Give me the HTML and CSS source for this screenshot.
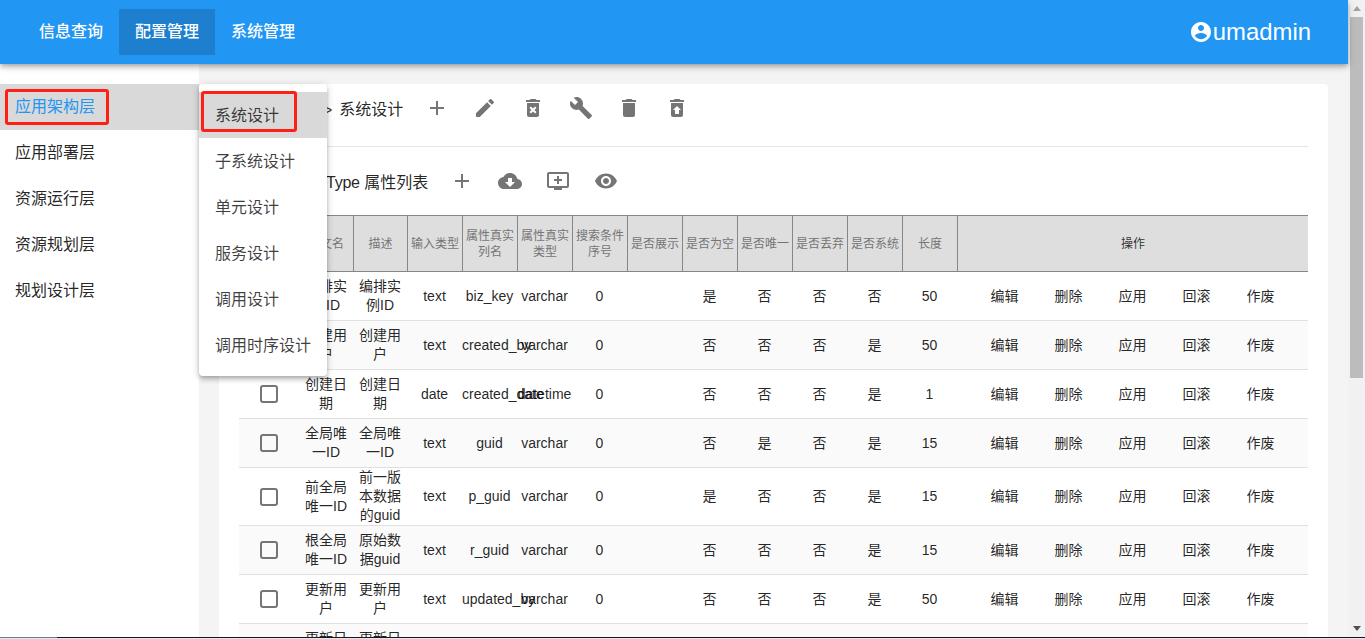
FILE: index.html
```html
<!DOCTYPE html>
<html lang="zh">
<head>
<meta charset="utf-8">
<title>配置管理</title>
<link rel="stylesheet" href="styles.css">
</head>
<body>
<div class="screen">
  <div class="window">
    <div class="page">
      <header class="topbar">
        <nav class="nav">
          <a class="nav-item">信息查询</a>
          <a class="nav-item active">配置管理</a>
          <a class="nav-item">系统管理</a>
        </nav>
        <div class="user">
          <svg class="user-icon" viewBox="0 0 24 24"><path d="M12 2C6.48 2 2 6.48 2 12s4.48 10 10 10 10-4.48 10-10S17.52 2 12 2zm0 3c1.66 0 3 1.34 3 3s-1.34 3-3 3-3-1.34-3-3 1.34-3 3-3zm0 14.2c-2.5 0-4.71-1.28-6-3.22.03-1.99 4-3.08 6-3.08 1.99 0 5.97 1.09 6 3.08-1.29 1.94-3.5 3.22-6 3.22z"/></svg>
          <span>umadmin</span>
        </div>
      </header>
      <div class="body">
        <aside class="sidebar">
          <div class="side-item selected"><span class="mark mark-side"></span>应用架构层</div>
          <div class="side-item">应用部署层</div>
          <div class="side-item">资源运行层</div>
          <div class="side-item">资源规划层</div>
          <div class="side-item">规划设计层</div>
          <div class="menu">
            <div class="menu-item selected"><span class="mark mark-menu"></span>系统设计</div>
            <div class="menu-item">子系统设计</div>
            <div class="menu-item">单元设计</div>
            <div class="menu-item">服务设计</div>
            <div class="menu-item">调用设计</div>
            <div class="menu-item">调用时序设计</div>
          </div>
        </aside>
        <main class="main">
          <section class="card">
            <div class="crumbs">
              <div class="crumb-text"><span>应用架构层</span><span class="sep">&gt;</span><span>系统设计</span></div>
              <div class="icons">
                <button class="icon-btn"><svg viewBox="0 0 24 24"><path d="M19 13h-6v6h-2v-6H5v-2h6V5h2v6h6v2z"/></svg></button>
                <button class="icon-btn"><svg viewBox="0 0 24 24"><path d="M3 17.25V21h3.75L17.81 9.94l-3.75-3.75L3 17.25zM20.71 7.04a1 1 0 0 0 0-1.41l-2.34-2.34a1 1 0 0 0-1.41 0l-1.83 1.83 3.75 3.75 1.83-1.83z"/></svg></button>
                <button class="icon-btn"><svg viewBox="0 0 24 24"><path d="M6 19c0 1.1.9 2 2 2h8c1.1 0 2-.9 2-2V7H6v12zm2.46-7.12 1.41-1.41L12 12.59l2.12-2.12 1.41 1.41L13.41 14l2.12 2.12-1.41 1.41L12 15.41l-2.12 2.12-1.41-1.41L10.59 14l-2.13-2.12zM15.5 4l-1-1h-5l-1 1H5v2h14V4z"/></svg></button>
                <button class="icon-btn"><svg viewBox="0 0 24 24"><path d="M22.7 19l-9.1-9.1c.9-2.3.4-5-1.5-6.9-2-2-5-2.4-7.4-1.3L9 6 6 9 1.6 4.7C.4 7.1.9 10.1 2.9 12.1c1.9 1.9 4.6 2.4 6.9 1.5l9.1 9.1c.4.4 1 .4 1.4 0l2.3-2.3c.5-.4.5-1.1.1-1.4z"/></svg></button>
                <button class="icon-btn"><svg viewBox="0 0 24 24"><path d="M6 19c0 1.1.9 2 2 2h8c1.1 0 2-.9 2-2V7H6v12zM19 4h-3.5l-1-1h-5l-1 1H5v2h14V4z"/></svg></button>
                <button class="icon-btn"><svg viewBox="0 0 24 24"><path d="M19 4h-3.5l-1-1h-5l-1 1H5v2h14zM6 7v12c0 1.1.9 2 2 2h8c1.1 0 2-.9 2-2V7H6zm8 7v4h-4v-4H8l4-4 4 4h-2z"/></svg></button>
              </div>
            </div>
            <div class="divider"></div>
            <div class="subhead">
              <div class="sub-title"><span class="sub-name">系统设计</span><span class="sub-latin">Type</span> 属性列表</div>
              <div class="icons">
                <button class="icon-btn"><svg viewBox="0 0 24 24"><path d="M19 13h-6v6h-2v-6H5v-2h6V5h2v6h6v2z"/></svg></button>
                <button class="icon-btn"><svg viewBox="0 0 24 24"><path d="M19.35 10.04C18.67 6.59 15.64 4 12 4 9.11 4 6.6 5.64 5.35 8.04 2.34 8.36 0 10.91 0 14c0 3.31 2.69 6 6 6h13c2.76 0 5-2.24 5-5 0-2.64-2.05-4.78-4.65-4.96zM17 13l-5 5-5-5h3V9h4v4h3z"/></svg></button>
                <button class="icon-btn"><svg viewBox="0 0 24 24"><path d="M21 3H3c-1.11 0-2 .89-2 2v12c0 1.1.89 2 2 2h5v2h8v-2h5c1.1 0 1.99-.9 1.99-2L23 5c0-1.11-.9-2-2-2zm0 14H3V5h18v12zm-5-7v2h-3v3h-2v-3H8v-2h3V7h2v3h3z"/></svg></button>
                <button class="icon-btn"><svg viewBox="0 0 24 24"><path d="M12 4.5C7 4.5 2.73 7.61 1 12c1.73 4.39 6 7.5 11 7.5s9.27-3.11 11-7.5c-1.73-4.39-6-7.5-11-7.5zM12 17c-2.76 0-5-2.24-5-5s2.24-5 5-5 5 2.24 5 5-2.24 5-5 5zm0-8c-1.66 0-3 1.34-3 3s1.34 3 3 3 3-1.34 3-3-1.34-3-3-3z"/></svg></button>
              </div>
            </div>
            <table class="grid">
              <colgroup>
                <col class="c-check"><col class="c-name"><col class="c-name"><col class="c"><col class="c"><col class="c"><col class="c"><col class="c"><col class="c"><col class="c"><col class="c"><col class="c"><col class="c"><col>
              </colgroup>
              <thead>
                <tr><th></th><th>中文名</th><th>描述</th><th>输入类型</th><th>属性真实列名</th><th>属性真实类型</th><th>搜索条件序号</th><th>是否展示</th><th>是否为空</th><th>是否唯一</th><th>是否丢弃</th><th>是否系统</th><th>长度</th><th class="op">操作</th></tr>
              </thead>
              <tbody id="rows"></tbody>
            </table>
          </section>
        </main>
      </div>
    </div>
    <div class="scrollbar">
      <div class="arrow up"></div>
      <div class="track"><div class="thumb"></div></div>
      <div class="arrow down"></div>
    </div>
  </div>
  <div class="edge"></div>
</div>
<script src="app.js"></script>
</body>
</html>
```
FILE: app.js
```js
var data = [
  ["编排实例ID","编排实例ID","text","biz_key","varchar","0","","是","否","否","否","50"],
  ["创建用户","创建用户","text","created_by","varchar","0","","否","否","否","是","50"],
  ["创建日期","创建日期","date","created_date","datetime","0","","否","否","否","是","1"],
  ["全局唯一ID","全局唯一ID","text","guid","varchar","0","","否","是","否","是","15"],
  ["前全局唯一ID","前一版本数据的guid","text","p_guid","varchar","0","","是","否","否","是","15"],
  ["根全局唯一ID","原始数据guid","text","r_guid","varchar","0","","否","否","否","是","15"],
  ["更新用户","更新用户","text","updated_by","varchar","0","","否","否","否","是","50"],
  ["更新日期","更新日期","date","updated_date","datetime","0","","否","否","否","是","1"]
];
var ops = ["编辑","删除","应用","回滚","作废"];
var html = data.map(function (r) {
  var cells = r.map(function (v) { return "<td>" + v + "</td>"; }).join("");
  var acts = ops.map(function (o) { return "<span>" + o + "</span>"; }).join("");
  return '<tr><td><span class="box"></span></td>' + cells + '<td><div class="acts">' + acts + "</div></td></tr>";
}).join("");
document.getElementById("rows").innerHTML = html;
```
FILE: styles.css
```css
* { box-sizing: border-box; }
html, body { margin: 0; height: 100%; overflow: hidden; }
body { font-family: "Liberation Sans", "Noto Sans CJK SC", sans-serif; color: rgba(0,0,0,.87); }
.screen { height: 639px; display: flex; flex-direction: column; }
.window { flex: 1; min-height: 0; display: flex; }
.edge { height: 2px; flex: none; background: linear-gradient(90deg, #5f7e9c 0 57px, #14181c 57px) top / 100% 1px no-repeat, #e6e8ea; }
.page { flex: 1; min-width: 0; display: flex; flex-direction: column; background: #f4f4f4; }

.topbar { position: relative; z-index: 3; height: 64px; flex: none; background: #2196f3; color: #fff; display: flex; justify-content: space-between; align-items: center; padding: 0 37px 0 23px; box-shadow: 0 2px 4px -1px rgba(0,0,0,.2), 0 4px 5px 0 rgba(0,0,0,.14), 0 1px 10px 0 rgba(0,0,0,.12); }
.nav { display: flex; margin-top: -1px; }
.nav-item { width: 96px; height: 46px; padding-bottom: 4px; display: flex; align-items: center; justify-content: center; font-size: 16px; font-weight: 500; }
.nav-item.active { background: #1f7fcf; }
.user { display: flex; align-items: center; font-size: 23.9px; }
.user-icon { width: 24px; height: 24px; fill: #fff; }

.body { flex: 1; min-height: 0; display: flex; }
.sidebar { position: relative; width: 199px; flex: none; background: #fff; padding-top: 20px; font-size: 16px; }
.side-item { position: relative; height: 46px; padding-left: 15px; line-height: 46px; }
.side-item.selected { background: #d9d9d9; color: #2196f3; }
.menu { position: absolute; z-index: 2; left: 199px; top: 20px; width: 128px; height: 292px; padding: 8px 0; background: #fff; border-radius: 4px; box-shadow: 0 2px 4px -1px rgba(0,0,0,.2), 0 4px 5px 0 rgba(0,0,0,.14), 0 1px 10px 0 rgba(0,0,0,.12); }
.menu-item { position: relative; height: 46px; padding-left: 16px; line-height: 48px; color: rgba(0,0,0,.75); }
.menu-item.selected { background: #d9d9d9; }
.mark { position: absolute; border: 3px solid #ff1f14; border-radius: 3px; }
.mark-side { left: 5px; top: 5px; width: 104px; height: 36px; }
.mark-menu { left: 2px; top: -1px; width: 96px; height: 41px; }

.main { flex: 1; min-width: 0; padding: 20px 20px 0 20px; overflow: hidden; }
.card { background: #fff; border-radius: 4px 4px 0 0; padding: 0 20px; height: 100%; overflow: hidden; }
.crumbs { height: 62px; display: flex; align-items: flex-start; font-size: 16px; }
.crumb-text { width: 174px; flex: none; margin-top: 2px; line-height: 48px; white-space: nowrap; }
.sep { margin: 0 7px 0 5px; font-size: 14px; }
.icons { display: flex; }
.icon-btn { width: 48px; height: 48px; padding: 12px; border: 0; background: none; }
.icon-btn svg { width: 24px; height: 24px; fill: #757575; display: block; }
.divider { height: 1px; background: #e5e5e5; }
.subhead { height: 68px; display: flex; align-items: center; font-size: 16px; }
.sub-title { width: 199px; flex: none; white-space: nowrap; }
.sub-name { display: inline-block; width: 87px; }
.sub-latin { letter-spacing: -.25px; }

.grid { width: 1069px; border-collapse: separate; border-spacing: 0; table-layout: fixed; font-size: 14px; line-height: 19px; text-align: center; }
.c-check { width: 60px; }
.c-name { width: 54px; }
.c { width: 55px; }
th { height: 57px; padding: 0; font-size: 12px; line-height: 16px; font-weight: 400; color: #757575; background: #dedede; border-top: 1px solid #868686; border-bottom: 1px solid #868686; border-left: 1px solid #868686; }
th:first-child { border-left: 0; }
th:nth-child(2) { border-left: 0; }
th.op { color: rgba(0,0,0,.8); }
td { height: 49px; padding: 0; border-bottom: 1px solid #e0e0e0; }
tbody tr:nth-child(even) td { background: #fafafa; }
.box { display: block; width: 18px; height: 18px; margin: 0 auto; border: 2px solid #757575; border-radius: 3px; }
.acts { display: flex; justify-content: center; }
.acts span { width: 64px; }

.scrollbar { width: 17px; flex: none; background: #f1f1f1; display: flex; flex-direction: column; }
.track { flex: 1; padding: 0 2px; }
.thumb { height: 361px; background: #bcbcbc; }
.arrow { height: 17px; flex: none; position: relative; }
.arrow::after { content: ""; position: absolute; left: 5px; border-left: 4px solid transparent; border-right: 4px solid transparent; }
.arrow.up::after { top: 6px; border-bottom: 5px solid #a3a3a3; }
.arrow.down::after { top: 6px; border-top: 5px solid #505050; }
```
